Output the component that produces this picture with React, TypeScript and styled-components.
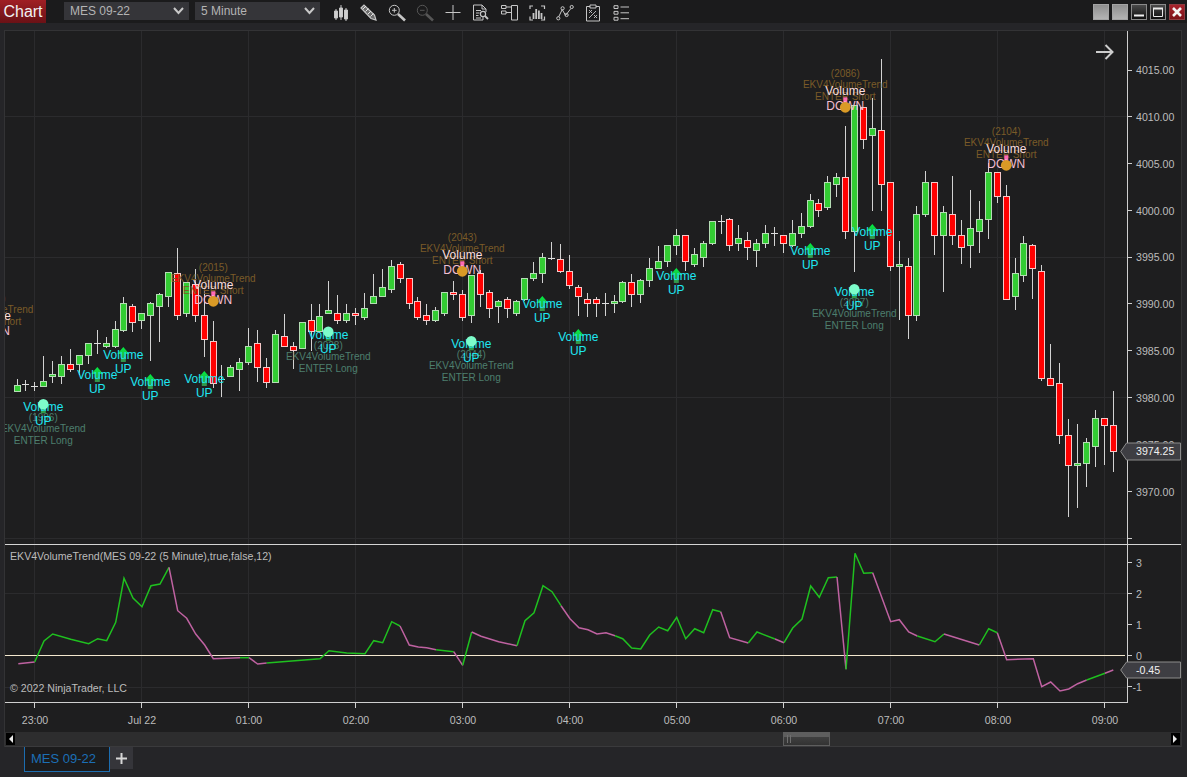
import React from "react";
import styled, { createGlobalStyle } from "styled-components";

type Bar = [number, number, number, number, number, "g" | "r" | "d"];

// x, body top, body bottom, wick top, wick bottom (page pixels, read off the chart)
const BARS: Bar[] = [
  [17.4, 385, 391, 379, 391, "g"], [25.5, 384, 384, 380, 391, "d"], [34.3, 386, 386, 382, 391, "d"],
  [43.3, 381, 386, 356, 386, "g"], [52.3, 374, 376, 361, 383, "g"], [61.3, 364, 376, 356, 384, "g"],
  [70.3, 364, 369, 349, 372, "r"], [79.3, 355, 364, 355, 375, "g"], [88.3, 343, 355, 343, 364, "g"],
  [97.3, 343, 343, 330, 354, "d"], [106.3, 343, 346, 337, 348, "g"], [115.3, 329, 346, 321, 348, "g"],
  [123.3, 303, 330, 297, 332, "g"], [132.3, 306, 322, 304, 332, "r"], [141.3, 313, 320, 313, 329, "g"],
  [150.3, 303, 315, 302, 361, "g"], [159.3, 294, 306, 293, 342, "g"], [168.3, 272, 296, 272, 307, "g"],
  [177.3, 273, 315, 248, 320, "r"], [186.3, 282, 313, 282, 317, "g"], [195.3, 284, 315, 269, 322, "r"],
  [204.3, 315, 339, 290, 357, "r"], [213.3, 341, 383, 321, 388, "r"], [221.3, 379, 379, 365, 397, "d"],
  [230.3, 367, 376, 365, 377, "g"], [239.3, 362, 369, 358, 391, "g"], [248.3, 346, 362, 328, 365, "g"],
  [257.3, 343, 367, 330, 382, "r"], [266.3, 367, 382, 358, 388, "r"], [275.3, 334, 382, 330, 383, "g"],
  [284.3, 336, 346, 314, 347, "r"], [293.3, 346, 350, 342, 369, "r"], [302.6, 322, 348, 322, 348, "g"],
  [311.6, 320, 331, 304, 351, "r"], [319.3, 316, 331, 304, 333, "g"], [328.3, 310, 313, 281, 313, "g"],
  [337.3, 313, 320, 295, 324, "r"], [346.3, 313, 320, 304, 323, "g"], [355.3, 313, 315, 308, 325, "r"],
  [364.3, 308, 317, 293, 320, "g"], [373.3, 296, 303, 274, 303, "g"], [382.3, 287, 296, 269, 297, "g"],
  [391.3, 266, 289, 260, 293, "g"], [400.3, 264, 278, 262, 283, "r"], [409.3, 278, 303, 278, 309, "r"],
  [417.3, 301, 317, 297, 320, "r"], [426.3, 315, 320, 304, 325, "r"], [435.3, 310, 320, 307, 322, "g"],
  [444.3, 292, 313, 292, 316, "g"], [453.3, 292, 294, 281, 300, "r"], [462.3, 294, 317, 290, 321, "r"],
  [471.3, 275, 315, 275, 323, "g"], [480.3, 273, 294, 270, 307, "r"], [489.3, 292, 308, 290, 318, "r"],
  [498.3, 301, 306, 300, 323, "g"], [507.3, 299, 308, 297, 318, "r"], [516.3, 301, 313, 300, 316, "g"],
  [524.3, 278, 299, 278, 301, "g"], [533.3, 273, 278, 262, 281, "g"], [542.3, 257, 273, 253, 283, "g"],
  [551.3, 258, 258, 242, 260, "d"], [560.3, 259, 271, 244, 273, "r"], [569.3, 271, 285, 255, 289, "r"],
  [578.3, 287, 296, 285, 316, "r"], [587.3, 299, 303, 293, 317, "r"], [596.3, 299, 303, 297, 317, "r"],
  [605.3, 303, 303, 293, 316, "d"], [614.3, 301, 303, 295, 313, "g"], [622.6, 282, 301, 281, 303, "g"],
  [631.6, 282, 294, 274, 307, "r"], [640.3, 280, 294, 279, 303, "g"], [649.3, 268, 280, 258, 287, "g"],
  [658.3, 261, 268, 246, 268, "g"], [667.3, 245, 261, 245, 267, "g"], [676.3, 235, 245, 229, 255, "g"],
  [685.3, 235, 261, 235, 271, "r"], [694.3, 254, 264, 248, 267, "g"], [703.3, 243, 257, 241, 267, "g"],
  [712.3, 221, 243, 221, 245, "g"], [721.3, 221, 221, 215, 234, "d"], [729.3, 219, 245, 218, 251, "r"],
  [738.3, 238, 243, 225, 251, "g"], [747.3, 240, 247, 232, 260, "r"], [756.3, 243, 250, 239, 267, "g"],
  [765.3, 233, 243, 225, 248, "g"], [774.3, 233, 233, 227, 246, "d"], [783.3, 235, 243, 235, 253, "r"],
  [792.3, 233, 245, 220, 247, "g"], [801.3, 226, 233, 213, 238, "g"], [810.3, 200, 226, 194, 228, "g"],
  [818.3, 203, 210, 199, 217, "r"], [827.3, 182, 207, 176, 210, "g"], [836.3, 177, 184, 173, 197, "g"],
  [845.3, 177, 231, 126, 239, "r"], [854.3, 105, 231, 105, 272, "g"], [863.3, 107, 139, 107, 149, "r"],
  [872.3, 128, 135, 98, 211, "g"], [881.3, 130, 184, 59, 211, "r"], [890.3, 182, 266, 182, 271, "r"],
  [899.3, 264, 266, 241, 320, "g"], [908.3, 266, 315, 258, 339, "r"], [916.3, 214, 315, 206, 321, "g"],
  [925.3, 182, 214, 171, 217, "g"], [934.3, 182, 235, 182, 255, "r"], [943.3, 212, 235, 206, 292, "g"],
  [952.3, 214, 235, 176, 245, "r"], [961.3, 235, 247, 220, 264, "r"], [970.3, 228, 245, 190, 268, "g"],
  [979.3, 219, 231, 201, 253, "g"], [988.3, 172, 219, 163, 239, "g"], [997.3, 172, 196, 172, 203, "r"],
  [1006.3, 196, 299, 185, 299, "r"], [1015.3, 273, 296, 258, 310, "g"], [1023.3, 243, 275, 236, 282, "g"],
  [1032.3, 245, 268, 244, 299, "r"], [1041.3, 271, 378, 265, 381, "r"], [1050.3, 378, 385, 344, 385, "r"],
  [1059.3, 383, 435, 363, 444, "r"], [1068.3, 435, 465, 419, 517, "r"], [1077.3, 463, 465, 424, 508, "g"],
  [1086.3, 442, 463, 438, 487, "g"], [1095.3, 418, 446, 410, 467, "g"], [1104.3, 418, 425, 418, 465, "r"],
  [1113.3, 425, 451, 391, 472, "r"],
];

const UP_SIGNALS = [
  [97.3, 367], [123.3, 347], [150.3, 374], [204.3, 371], [542.3, 296],
  [578.3, 329], [676.3, 268], [810.3, 243], [872.3, 224],
];
const LONGS = [[43.3, 404.3, 1996], [328.3, 331.7, 2028], [471.3, 341.3, 2044], [854.3, 289.3, 2087]];
const SHORTS = [[-9, 332, 1990], [213.3, 301.3, 2015], [462.3, 271.3, 2043], [845.3, 107.3, 2086], [1006.3, 165.3, 2104]];

const HOURS = [
  [34.5, "23:00"], [141.5, "Jul 22"], [248.5, "01:00"], [355.5, "02:00"], [462.5, "03:00"], [569.5, "04:00"],
  [676.5, "05:00"], [783.5, "06:00"], [890.5, "07:00"], [997.5, "08:00"], [1104.5, "09:00"],
] as const;

const PRICES = [
  [70, "4015.00"], [116.5, "4010.00"], [163.5, "4005.00"], [210.5, "4000.00"], [257, "3995.00"], [303.5, "3990.00"],
  [350.5, "3985.00"], [397.5, "3980.00"], [444.5, "3975.00"], [491.5, "3970.00"],
] as const;

const TREND: ["g" | "p", string][] = [
  ["p", "18.3,663.7 34.7,662"],
  ["g", "34.7,662 44,641 52.7,634 70.7,639.3 88.7,643.7 97.7,638.7 106.7,640.7 115.7,622.3 124,578.3 133,598 142,606.7 151,585.7 160,584 169,567.3"],
  ["p", "169,567.3 177.7,610.7 186.7,618.3 195.7,634 204.7,645 213.3,658.7 240,657.7"],
  ["g", "240,657.7 249,657.7"],
  ["p", "249,657.7 257.7,664 266.7,663"],
  ["g", "266.7,663 320,658.7 329,650.7 346.7,653 365,653.7 373.7,640.7 382.7,642.7 391.7,621.7 400,626"],
  ["p", "400,626 409.3,645 418.3,647 426.7,647.7 436,649.7"],
  ["g", "436,649.7 453.7,651.7"],
  ["p", "453.7,651.7 462.7,665.3"],
  ["g", "462.7,665.3 471.7,632"],
  ["p", "471.7,632 481,636.3 498.7,641.7 517,645.7"],
  ["g", "517,645.7 525,620.7 534,612.7 543,585.7 552,591.7 561,605.7"],
  ["p", "561,605.7 570,618.7 579,627.7 588,629.7 597,634 606,632.7 615,635.7"],
  ["g", "615,635.7 622.7,638.7 631.7,648 640.7,649 649.7,635 658.7,627 667.7,630.7 676.7,617.3 685.7,638.7 694.7,628.7 703.7,632.7 712.7,609.7 720.7,611.7"],
  ["p", "720.7,611.7 729.7,637.7 748.3,643"],
  ["g", "748.3,643 757,632 775,639"],
  ["p", "775,639 784,642.7"],
  ["g", "784,642.7 792.7,628 802,619 810.7,586 819.3,597.3 828.3,577.7 837,577"],
  ["p", "837,577 846,669.3"],
  ["g", "846,669.3 855,553.3 863.7,573.3 872.7,572.7"],
  ["p", "872.7,572.7 890.7,621.7 899.3,619.7 908.7,632 917.3,636"],
  ["g", "917.3,636 935,641.7 944,634"],
  ["p", "944,634 979.3,645"],
  ["g", "979.3,645 988.7,628.7 997.3,632.7"],
  ["p", "997.3,632.7 1006.7,659.7 1033.3,658.7 1041.7,686.7 1050.7,682 1060,691 1068.7,689 1077.7,683.7 1086.7,680"],
  ["g", "1086.7,680 1105,673.3"],
  ["p", "1105,673.3 1113.3,670"],
];

const TONES: Record<string, string> = {
  cyan: "#1fe6f2",
  volumeDown: "#fbdede",
  down: "#f2bfd2",
  long: "#4d7f6e",
  short: "#7a5b28",
  axis: "#bcbcbc",
  bright: "#f0f0f0",
};

const GlobalStyle = createGlobalStyle`
  html, body {
    margin: 0;
    background: #252528;
    font-family: "Liberation Sans", Arial, sans-serif;
  }
  body {
    overflow: hidden;
  }
`;

const Page = styled.div`
  width: 1187px;
  height: 777px;
  display: flex;
  flex-direction: column;
  background: #252528;
  overflow: hidden;
`;

const TitleBar = styled.header`
  height: 23px;
  flex: none;
  display: flex;
  background: #1b1b1c;
`;

const ChartTab = styled.div`
  width: 46px;
  height: 23px;
  line-height: 23px;
  text-align: center;
  color: #f2f2f2;
  font-size: 16px;
  background: linear-gradient(#a01f24, #6a1116);
`;

const Selects = styled.div`
  display: flex;
  gap: 6px;
  margin: 2px 0 0 18px;
`;

const Select = styled.div`
  width: 125px;
  height: 18px;
  padding: 0 5px 0 6px;
  box-sizing: border-box;
  display: flex;
  align-items: center;
  justify-content: space-between;
  background: #353539;
  color: #b4b4b4;
  font-size: 12px;
`;

const Tools = styled.div`
  display: flex;
  align-items: center;
  gap: 6px;
  margin-left: 10px;
  height: 23px;
`;

const ToolIcon = styled.svg.attrs({ viewBox: "0 0 22 22" })<{ $dim?: boolean }>`
  width: 22px;
  height: 22px;
  flex: none;
  fill: none;
  stroke: ${(p) => (p.$dim ? "#565656" : "#c6c6c6")};
  stroke-width: 1;
`;

const WindowButtons = styled.div`
  margin-left: auto;
  display: flex;
  gap: 3px;
  padding: 4px 2px 0 0;
`;

const WinButton = styled.div<{ $kind: "idle" | "dark" | "close" }>`
  width: 16px;
  height: 16px;
  box-sizing: border-box;
  display: flex;
  align-items: center;
  justify-content: center;
  background: ${(p) =>
    p.$kind === "idle"
      ? "linear-gradient(#8f8f8f, #b4b4b4)"
      : p.$kind === "close"
      ? "linear-gradient(#a8242c, #7c1219)"
      : "linear-gradient(#4a4a4a, #0e0e0e)"};
  border: 1px solid ${(p) => (p.$kind === "dark" ? "#8a8a8a" : p.$kind === "close" ? "#8d3a3f" : "#a4a4a4")};
`;

const Frame = styled.main`
  flex: none;
  margin: 7px 5px 0 4px;
  background: #1e1e1f;
  border: 1px solid #333335;
  border-bottom: 0;
  display: flex;
  flex-direction: column;
`;

const Plot = styled.svg`
  display: block;
  width: 1176px;
  flex: none;
  overflow: hidden;
`;

const Divider = styled.div`
  height: 1px;
  flex: none;
  background: #d4d4d4;
`;

const ChartText = styled.text<{ $tone: string; $size: number; $anchor?: string }>`
  fill: ${(p) => TONES[p.$tone]};
  font-size: ${(p) => p.$size}px;
  text-anchor: ${(p) => p.$anchor || "middle"};
`;

const Scroll = styled.div`
  height: 14px;
  flex: none;
  display: flex;
  align-items: stretch;
  justify-content: space-between;
  background: #2d2d2e;
  border-bottom: 1px solid #3a3a3c;
  box-sizing: content-box;
  position: relative;
`;

const ScrollEnd = styled.div`
  width: 9px;
  margin: 1px;
  background: #000;
  display: flex;
  align-items: center;
  justify-content: center;
`;

const ScrollThumb = styled.div`
  position: absolute;
  left: 778px;
  top: 0;
  width: 47px;
  height: 14px;
  box-sizing: border-box;
  padding-left: 3px;
  border: 1px solid #5e5e5e;
  background: linear-gradient(#5e5e5e 0 35%, #3f3f3f 35%, #333 100%);
  display: flex;
  gap: 2px;
  align-items: center;
`;

const Grip = styled.i`
  width: 1px;
  height: 8px;
  background: #6f6f6f;
`;

const TabBar = styled.nav`
  flex: 1;
  display: flex;
  align-items: flex-start;
  padding-left: 24px;
`;

const Tab = styled.div`
  width: 86px;
  height: 25px;
  box-sizing: border-box;
  border: 1px solid #1c6db0;
  border-top: 0;
  background: #1b1b1c;
  color: #1c6fb5;
  font-size: 13px;
  line-height: 24px;
  padding-left: 6px;
`;

const AddTab = styled.div`
  width: 23px;
  height: 22px;
  background: #35353a;
  color: #d6d6d6;
  display: flex;
  align-items: center;
  justify-content: center;
`;

const Chevron = () => (
  <svg width="11" height="8" viewBox="0 0 11 8" fill="none" stroke="#c8c8c8" strokeWidth="2">
    <path d="M1 1 L5.5 6 L10 1" />
  </svg>
);

const Toolbar = () => (
  <Tools>
    <ToolIcon>
      <path d="M6 8V19M11 4V19M16 7V20" />
      <path d="M4.5 10h3v7h-3zM9.5 7h3v9h-3zM14.5 9h3v9h-3z" fill="#d0d0d0" />
    </ToolIcon>
    <ToolIcon>
      <path d="M3 7 L6 4 L16.5 14 L18 19 L13 17.5 Z" fill="#6c6c6c" strokeWidth="1.2" />
      <path d="M5 8 L8 5 M7.5 10.5 L10.5 7.5 M10 13 L13 10 M12.5 15.5 L15.5 12.5" stroke="#e4e4e4" />
    </ToolIcon>
    <ToolIcon>
      <circle cx="8.3" cy="9.3" r="5" />
      <path d="M6 9.3h4.6M8.3 7v4.6" />
      <path d="M12 13 L19 19.5" strokeWidth="2.6" />
    </ToolIcon>
    <ToolIcon $dim>
      <circle cx="8.3" cy="9.3" r="5" />
      <path d="M6 9.3h4.6" />
      <path d="M12 13 L19 19.5" strokeWidth="2.6" />
    </ToolIcon>
    <ToolIcon>
      <path d="M11 4V19M3.5 11.5H18.5" />
    </ToolIcon>
    <ToolIcon>
      <path d="M13 15.5 V19 H3.5 V4 H12 L16 8 V11 M12 4 V8 H16" />
      <path d="M6 9.5H11M6 12H9.5M6 14.5H8.5M6 17H11" />
      <circle cx="13" cy="13" r="2.6" strokeWidth="1.2" />
      <path d="M15 15 L18 18" strokeWidth="1.8" />
    </ToolIcon>
    <ToolIcon>
      <path d="M13.5 4.5H19.5V19H13.5ZM3.5 4.5H8V7.5H3.5ZM3.5 10H8V13H3.5ZM8 6H13.5M8 11.5H13.5" />
    </ToolIcon>
    <ToolIcon>
      <path d="M7 5H4V8M15 5H18.5V8M4 15.5V19H7M18.5 15.5V19H15" strokeWidth="1.2" />
      <path d="M7.5 12V18M10.2 8V18M12.9 9.5V18M15.5 12V18" strokeWidth="1.8" />
    </ToolIcon>
    <ToolIcon>
      <path d="M4.6 16 L8.2 8.6 L11.6 14.4 L16.8 7.6" />
      <circle cx="4.3" cy="17.3" r="1.6" />
      <circle cx="8.6" cy="7.3" r="1.6" />
      <circle cx="12.6" cy="14" r="1.6" />
      <circle cx="17.7" cy="6" r="1.6" />
    </ToolIcon>
    <ToolIcon>
      <path d="M8 5.5H4.5V20H17.5V5.5H14M8 4H14V7H8Z" />
      <path d="M7 9 L10 12M10 9 L7 12M12 14 L15 17M15 14 L12 17M7 17 L14 10" strokeWidth="0.9" />
    </ToolIcon>
    <ToolIcon>
      <path d="M4 4.7H8V7.5H4ZM4 10.4H8V13.2H4ZM4 16.3H8V19.2H4ZM10.5 6H19M10.5 11.8H19M10.5 17.7H19" />
    </ToolIcon>
  </Tools>
);

const Candles = () => (
  <g>
    {BARS.map(([rawX, top, bottom, high, low, kind], i) => {
      const x = Math.floor(rawX) + 0.5;
      return (
        <g key={i}>
          <line x1={x} x2={x} y1={high} y2={low} stroke="#d2d2d2" />
          {kind === "d" ? (
            <line x1={x - 3.5} x2={x + 3.5} y1={top + 0.5} y2={top + 0.5} stroke="#dedede" />
          ) : (
            <rect
              x={x - 3}
              y={top + 0.5}
              width={6}
              height={bottom - top}
              fill={kind === "g" ? "#33cc33" : "#ff0000"}
              stroke={kind === "g" ? "#b5dcb5" : "#f5c8c8"}
            />
          )}
        </g>
      );
    })}
  </g>
);

const UpArrow = ({ x, y }: { x: number; y: number }) => (
  <path
    d={`M${x} ${y} L${x + 6} ${y + 7} H${x + 2.5} V${y + 15} H${x - 2.5} V${y + 7} H${x - 6} Z`}
    fill="url(#upFill)"
  />
);

const VolumeUp = ({ x, y }: { x: number; y: number }) => (
  <>
    <ChartText $tone="cyan" $size={12} x={x} y={y}>Volume</ChartText>
    <ChartText $tone="cyan" $size={12} x={x} y={y + 14}>UP</ChartText>
  </>
);

const Signals = () => (
  <g>
    {LONGS.map(([x, y, bar]) => (
      <g key={bar}>
        <ChartText $tone="long" $size={10} x={x} y={y + 17}>({bar})</ChartText>
        <ChartText $tone="long" $size={10} x={x} y={y + 28}>EKV4VolumeTrend</ChartText>
        <ChartText $tone="long" $size={10} x={x} y={y + 40}>ENTER Long</ChartText>
        <path d={`M${x - 2.5} ${y + 2} H${x + 2.5} V${y + 9} H${x - 2.5} Z`} fill="#2f9a4a" />
        <VolumeUp x={x} y={y + 7} />
        <circle cx={x} cy={y} r={5.2} fill="#7dfcca" />
      </g>
    ))}
    {UP_SIGNALS.map(([x, y]) => (
      <g key={x}>
        <UpArrow x={x} y={y} />
        <VolumeUp x={x} y={y + 11.5} />
      </g>
    ))}
    {SHORTS.map(([x, y, bar]) => (
      <g key={bar}>
        <ChartText $tone="short" $size={10} x={x} y={y - 30}>({bar})</ChartText>
        <ChartText $tone="short" $size={10} x={x} y={y - 19}>EKV4VolumeTrend</ChartText>
        <ChartText $tone="short" $size={10} x={x} y={y - 7}>ENTER Short</ChartText>
        <rect x={x - 2} y={y - 10} width={4} height={8} fill="#ff69b4" />
        <ChartText $tone="volumeDown" $size={12} x={x} y={y - 12}>Volume</ChartText>
        <ChartText $tone="down" $size={12} x={x} y={y + 2.5}>DOWN</ChartText>
        <circle cx={x} cy={y} r={5.4} fill="#d99a26" />
      </g>
    ))}
  </g>
);

const PriceFlag = ({ y, h, text, x }: { y: number; h: number; text: string; x: number }) => (
  <>
    <path
      d={`M1120.7 ${y + h / 2} L1126.5 ${y} H1180.5 V${y + h} H1126.5 Z`}
      fill="#3e3e43"
      stroke="#8c8c8c"
    />
    <ChartText $tone="bright" $size={10.6} $anchor="start" x={x} y={y + h / 2 + 3.8}>{text}</ChartText>
  </>
);

const PricePanel = () => (
  <Plot viewBox="5 31 1176 513" height="513">
    <defs>
      <linearGradient id="upFill" x1="0" y1="0" x2="0" y2="1">
        <stop offset="0" stopColor="#00f040" />
        <stop offset="1" stopColor="#358f4c" />
      </linearGradient>
    </defs>
    {HOURS.map(([x]) => (
      <line key={x} x1={x} x2={x} y1={31} y2={544} stroke="#2b2b2d" />
    ))}
    {[116.5, 257.5, 397.5, 538.5].map((y) => (
      <line key={y} x1={5} x2={1127} y1={y} y2={y} stroke="#2b2b2d" />
    ))}
    <Candles />
    <Signals />
    <path d="M1096 52 H1112 M1105.5 45 L1112.5 52 L1105.5 59" fill="none" stroke="#cdcdcd" strokeWidth="2" />
    <line x1={1127.5} x2={1127.5} y1={31} y2={544} stroke="#cfcfcf" />
    {[...PRICES.map((p) => p[0]), 538.5].map((y) => (
      <line key={y} x1={1127} x2={1132} y1={Math.floor(y) + 0.5} y2={Math.floor(y) + 0.5} stroke="#cfcfcf" />
    ))}
    {PRICES.map(([y, label]) => (
      <ChartText key={label} $tone="axis" $size={10.6} $anchor="start" x={1136} y={y + 4}>{label}</ChartText>
    ))}
    <PriceFlag y={443} h={17} text="3974.25" x={1136} />
  </Plot>
);

const IndicatorPanel = () => (
  <Plot viewBox="5 545 1176 157" height="157">
    {HOURS.map(([x]) => (
      <line key={x} x1={x} x2={x} y1={545} y2={702} stroke="#2b2b2d" />
    ))}
    {[593.5, 687.5].map((y) => (
      <line key={y} x1={5} x2={1127} y1={y} y2={y} stroke="#2b2b2d" />
    ))}
    <line x1={5} x2={1125} y1={655.5} y2={655.5} stroke="#f4e8cf" />
    {TREND.map(([tone, points], i) => (
      <polyline
        key={i}
        points={points}
        fill="none"
        strokeWidth="1.5"
        stroke={tone === "g" ? "#1fc01f" : "#bf62a1"}
      />
    ))}
    <ChartText $tone="axis" $size={10.6} $anchor="start" x={10} y={560}>
      EKV4VolumeTrend(MES 09-22 (5 Minute),true,false,12)
    </ChartText>
    <ChartText $tone="axis" $size={10.6} $anchor="start" x={10} y={692}>© 2022 NinjaTrader, LLC</ChartText>
    <line x1={1127.5} x2={1127.5} y1={545} y2={702} stroke="#cfcfcf" />
    {[[562.5, "3"], [593.5, "2"], [624.5, "1"], [655.5, "0"], [686.5, "-1"]].map(([y, label]) => (
      <g key={label}>
        <line x1={1127} x2={1132} y1={y} y2={y} stroke="#cfcfcf" />
        <ChartText $tone="axis" $size={10.6} $anchor={label === "-1" ? "end" : "start"} x={label === "-1" ? 1142 : 1136} y={Number(y) + 4.5}>
          {label}
        </ChartText>
      </g>
    ))}
    <PriceFlag y={662} h={16} text="-0.45" x={1136} />
  </Plot>
);

const TimeAxis = () => (
  <Plot viewBox="5 702 1176 30" height="30">
    <line x1={5} x2={1128} y1={702.5} y2={702.5} stroke="#cfcfcf" />
    {HOURS.map(([x, label]) => (
      <g key={x}>
        <line x1={x} x2={x} y1={703} y2={708} stroke="#cfcfcf" />
        <ChartText $tone="axis" $size={10.6} x={x + 0.5} y={724}>{label}</ChartText>
      </g>
    ))}
  </Plot>
);

export default function App() {
  return (
    <Page>
      <GlobalStyle />
      <TitleBar>
        <ChartTab>Chart</ChartTab>
        <Selects>
          <Select>MES 09-22<Chevron /></Select>
          <Select>5 Minute<Chevron /></Select>
        </Selects>
        <Toolbar />
        <WindowButtons>
          <WinButton $kind="idle" />
          <WinButton $kind="idle" />
          <WinButton $kind="dark">
            <svg width="12" height="12" viewBox="0 0 12 12"><rect x="1" y="8.5" width="10" height="2" fill="#f0f0f0" /></svg>
          </WinButton>
          <WinButton $kind="dark">
            <svg width="12" height="12" viewBox="0 0 12 12" fill="none" stroke="#e8e8e8"><path d="M1.5 2.5H10.5V10.5H1.5Z" /><path d="M1 2.5H11" strokeWidth="2" /></svg>
          </WinButton>
          <WinButton $kind="close">
            <svg width="12" height="12" viewBox="0 0 12 12" stroke="#f4f4f4" strokeWidth="2.6"><path d="M2 2L10 10M10 2L2 10" /></svg>
          </WinButton>
        </WindowButtons>
      </TitleBar>
      <Frame>
        <PricePanel />
        <Divider />
        <IndicatorPanel />
        <TimeAxis />
        <Scroll>
          <ScrollEnd>
            <svg width="5" height="8" viewBox="0 0 5 8"><path d="M5 0V8L1 4Z" fill="#e8e8e8" /></svg>
          </ScrollEnd>
          <ScrollThumb><Grip /><Grip /></ScrollThumb>
          <ScrollEnd>
            <svg width="5" height="8" viewBox="0 0 5 8"><path d="M0 0V8L4 4Z" fill="#e8e8e8" /></svg>
          </ScrollEnd>
        </Scroll>
      </Frame>
      <TabBar>
        <Tab>MES 09-22</Tab>
        <AddTab>
          <svg width="11" height="11" viewBox="0 0 11 11" stroke="#d6d6d6" strokeWidth="2"><path d="M5.5 0V11M0 5.5H11" /></svg>
        </AddTab>
      </TabBar>
    </Page>
  );
}
